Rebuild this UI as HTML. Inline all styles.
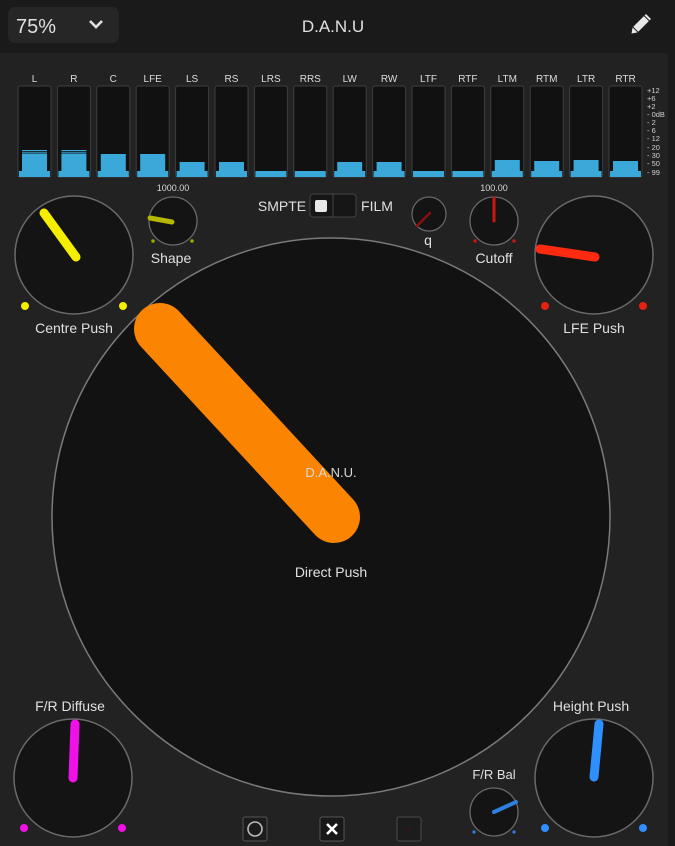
<!DOCTYPE html>
<html><head><meta charset="utf-8"><style>
html,body{margin:0;padding:0;background:#232323;}
body{width:675px;height:846px;overflow:hidden;position:relative;font-family:"Liberation Sans",sans-serif;}
svg{position:absolute;left:0;top:0}
</style></head><body>
<svg width="675" height="846" viewBox="0 0 675 846" font-family="Liberation Sans, sans-serif">
<rect x="0" y="0" width="675" height="846" fill="#222222"/>
<rect x="0" y="0" width="675" height="53" fill="#1a1a1a"/>
<rect x="668" y="0" width="7" height="846" fill="#1a1a1a"/>
<rect x="8" y="7" width="111" height="36" rx="7" fill="#262626"/>
<text x="16" y="33" font-size="20" fill="#e0e0e0">75%</text>
<path d="M90 21 L96 27 L102 21" stroke="#e0e0e0" stroke-width="2.6" fill="none"/>
<text x="333" y="32" font-size="17" fill="#e0e0e0" text-anchor="middle">D.A.N.U</text>
<g transform="translate(640,25) rotate(45)"><rect x="-3.5" y="-9" width="7" height="15" fill="#e8e8e8"/><path d="M-3.5 7 L3.5 7 L0 12 Z" fill="#e8e8e8"/><rect x="-3.5" y="-12" width="7" height="2" fill="#e8e8e8"/></g>

<g id="meters" font-size="10" fill="#dcdcdc" text-anchor="middle">
</g>
<g fill="#cfcfcf" font-size="7.5">
<text x="647" y="93">+12</text><text x="647" y="101">+6</text><text x="647" y="109">+2</text><text x="647" y="117">- 0dB</text><text x="647" y="125">- 2</text><text x="647" y="133">- 6</text><text x="647" y="141">- 12</text><text x="647" y="150">- 20</text><text x="647" y="158">- 30</text><text x="647" y="166">- 50</text><text x="647" y="175">- 99</text>
</g>

<circle cx="331" cy="517" r="279" fill="#121212" stroke="#7a7a7a" stroke-width="1.5"/>
<line x1="160" y1="329" x2="334" y2="517" stroke="#fb8500" stroke-width="52" stroke-linecap="round"/>
<text x="331" y="477" font-size="13" fill="#d8d8d8" text-anchor="middle">D.A.N.U.</text>
<text x="331" y="577" font-size="14" fill="#e0e0e0" text-anchor="middle">Direct Push</text>

<!-- Centre push -->
<circle cx="74" cy="255" r="59" fill="#141414" stroke="#6a6a6a" stroke-width="1.5"/>
<line x1="44" y1="213" x2="76" y2="257" stroke="#f6ee00" stroke-width="9" stroke-linecap="round"/>
<circle cx="25" cy="306" r="4" fill="#f6ee00"/><circle cx="123" cy="306" r="4" fill="#f6ee00"/>
<text x="74" y="333" font-size="14" fill="#e0e0e0" text-anchor="middle">Centre Push</text>
<!-- LFE push -->
<circle cx="594" cy="255" r="59" fill="#141414" stroke="#6a6a6a" stroke-width="1.5"/>
<line x1="540" y1="249" x2="595" y2="257" stroke="#ff2a10" stroke-width="9" stroke-linecap="round"/>
<circle cx="545" cy="306" r="4" fill="#e82010"/><circle cx="643" cy="306" r="4" fill="#e82010"/>
<text x="594" y="333" font-size="14" fill="#e0e0e0" text-anchor="middle">LFE Push</text>
<!-- F/R Diffuse -->
<circle cx="73" cy="778" r="59" fill="#141414" stroke="#6a6a6a" stroke-width="1.5"/>
<line x1="75" y1="724" x2="73" y2="778" stroke="#f010e8" stroke-width="9" stroke-linecap="round"/>
<circle cx="24" cy="828" r="4" fill="#f010e8"/><circle cx="122" cy="828" r="4" fill="#f010e8"/>
<text x="70" y="711" font-size="14" fill="#e0e0e0" text-anchor="middle">F/R Diffuse</text>
<!-- Height push -->
<circle cx="594" cy="778" r="59" fill="#141414" stroke="#6a6a6a" stroke-width="1.5"/>
<line x1="599" y1="724" x2="594" y2="777" stroke="#2f8fff" stroke-width="9" stroke-linecap="round"/>
<circle cx="545" cy="828" r="4" fill="#2f8fff"/><circle cx="643" cy="828" r="4" fill="#2f8fff"/>
<text x="591" y="711" font-size="14" fill="#e0e0e0" text-anchor="middle">Height Push</text>
<!-- Shape -->
<text x="173" y="191" font-size="9" fill="#d8d8d8" text-anchor="middle">1000.00</text>
<circle cx="173" cy="221" r="24" fill="#141414" stroke="#6a6a6a" stroke-width="1.3"/>
<line x1="150" y1="218" x2="172" y2="222" stroke="#b8b800" stroke-width="5" stroke-linecap="round"/>
<circle cx="153" cy="241" r="1.8" fill="#9aa800"/><circle cx="192" cy="241" r="1.8" fill="#9aa800"/>
<text x="171" y="263" font-size="14" fill="#e0e0e0" text-anchor="middle">Shape</text>
<!-- SMPTE -->
<text x="282" y="211" font-size="14" fill="#e0e0e0" text-anchor="middle">SMPTE</text>
<rect x="310" y="194" width="46" height="23" rx="3" fill="#161616" stroke="#444" stroke-width="1"/>
<line x1="333" y1="194" x2="333" y2="217" stroke="#444"/>
<rect x="315" y="200" width="12" height="12" rx="2" fill="#e8e8e8"/>
<text x="377" y="211" font-size="14" fill="#e0e0e0" text-anchor="middle">FILM</text>
<!-- q -->
<circle cx="429" cy="214" r="17" fill="#141414" stroke="#6a6a6a" stroke-width="1.2"/>
<line x1="417" y1="226" x2="430" y2="213" stroke="#8a1010" stroke-width="2.5" stroke-linecap="round"/>
<text x="428" y="245" font-size="14" fill="#e0e0e0" text-anchor="middle">q</text>
<!-- Cutoff -->
<text x="494" y="191" font-size="9" fill="#d8d8d8" text-anchor="middle">100.00</text>
<circle cx="494" cy="221" r="24" fill="#141414" stroke="#6a6a6a" stroke-width="1.3"/>
<line x1="494" y1="198" x2="494" y2="221" stroke="#c81810" stroke-width="3" stroke-linecap="round"/>
<circle cx="475" cy="241" r="1.8" fill="#c01810"/><circle cx="514" cy="241" r="1.8" fill="#c01810"/>
<text x="494" y="263" font-size="14" fill="#e0e0e0" text-anchor="middle">Cutoff</text>
<!-- F/R Bal -->
<text x="494" y="779" font-size="13" fill="#e0e0e0" text-anchor="middle">F/R Bal</text>
<circle cx="494" cy="812" r="24" fill="#141414" stroke="#6a6a6a" stroke-width="1.3"/>
<line x1="494" y1="812" x2="516" y2="802" stroke="#2f7fe0" stroke-width="4" stroke-linecap="round"/>
<circle cx="474" cy="832" r="1.6" fill="#2f7fe0"/><circle cx="514" cy="832" r="1.6" fill="#2f7fe0"/>
<!-- bottom buttons -->
<rect x="243" y="817" width="24" height="24" rx="2" fill="#1c1c1c" stroke="#555"/>
<circle cx="255" cy="829" r="7" fill="none" stroke="#bbb" stroke-width="1.6"/>
<rect x="320" y="817" width="24" height="24" rx="2" fill="#181818" stroke="#555"/>
<path d="M327 824 L337 834 M337 824 L327 834" stroke="#fff" stroke-width="2.6"/>
<rect x="397" y="817" width="24" height="24" rx="2" fill="#1c1c1c" stroke="#4a4a4a"/>
<path d="M407 827 L411 831 M411 827 L407 831" stroke="#3a1515" stroke-width="1.2"/>
</svg>
<script>
(function(){
var ns="http://www.w3.org/2000/svg",g=document.getElementById("meters");
var L=["L","R","C","LFE","LS","RS","LRS","RRS","LW","RW","LTF","RTF","LTM","RTM","LTR","RTR"];
var tops=[154,154,154,154,162,162,171,171,162,162,171,171,160,161,160,161];
for(var i=0;i<16;i++){var x=18+i*39.4;
function el(t,a){var e=document.createElementNS(ns,t);for(var k in a)e.setAttribute(k,a[k]);g.appendChild(e);return e;}
var tx=el("text",{x:x+16.5,y:82});tx.textContent=L[i];
el("rect",{x:x,y:86,width:33,height:91,rx:2,fill:"#111",stroke:"#3e3e3e","stroke-width":1});
el("rect",{x:x+1,y:171,width:31,height:6,fill:"#3aa8d8"});
if(tops[i]<171)el("rect",{x:x+4,y:tops[i],width:25,height:171-tops[i],fill:"#3aa8d8"});
if(i<2){el("rect",{x:x+4,y:150,width:25,height:1.2,fill:"#3aa8d8"});el("rect",{x:x+4,y:152.3,width:25,height:1.2,fill:"#3aa8d8"});}
}})();
</script>
</body></html>
